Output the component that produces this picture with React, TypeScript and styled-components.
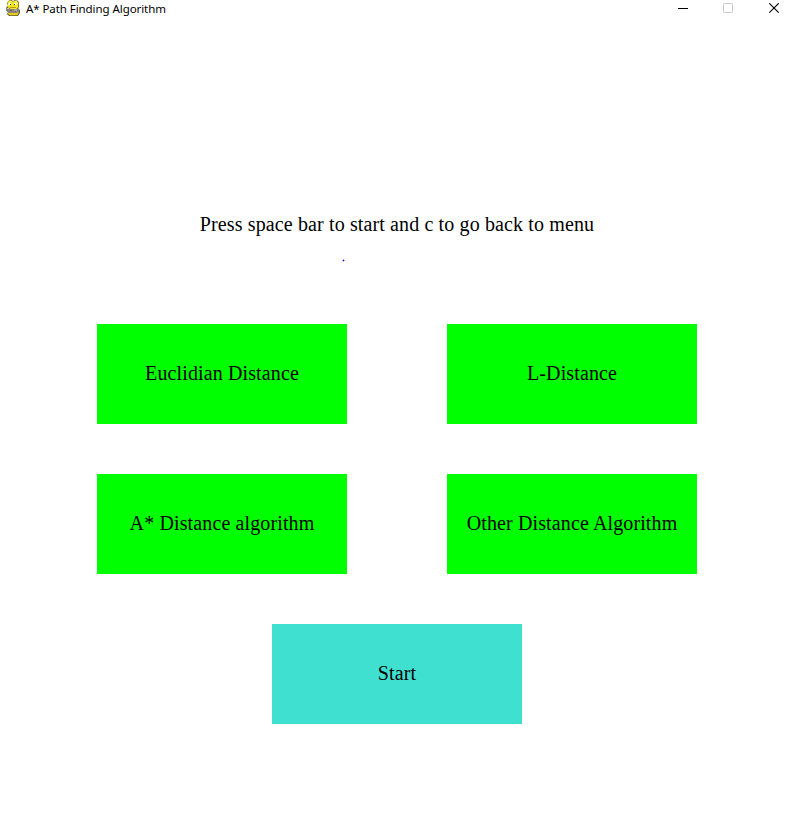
import React from "react";
import styled, { createGlobalStyle } from "styled-components";

const GlobalStyle = createGlobalStyle`
  * { box-sizing: border-box; }
  body { margin: 0; background: #fff; overflow: hidden; }
`;

const Window = styled.div`
  width: 794px;
  height: 815px;
  display: flex;
  flex-direction: column;
  background: #fff;
  color: #000;
`;

const TitleBar = styled.header`
  height: 24px;
  display: flex;
  align-items: flex-start;
  padding-left: 5px;
`;

const Title = styled.h1`
  flex: 1;
  margin: 2px 0 0 5px;
  white-space: nowrap;
  font: 400 11.5px/14px "Noto Sans", "Open Sans", sans-serif;
  letter-spacing: -0.07px;
`;

const Controls = styled.div`
  display: flex;
  height: 16px;
  padding: 3px 14px 0 0;
`;

const ControlButton = styled.button`
  width: 11px;
  height: 11px;
  margin-left: 35px;
  padding: 0;
  border: 0;
  background: none;
  display: flex;
  color: #000;

  &:disabled { color: #ccc; margin-left: 34px; }
`;

const Canvas = styled.main`
  flex: 1;
  display: flex;
  flex-direction: column;
  align-items: center;
  font: 20px/24px "Liberation Serif", serif;
  letter-spacing: 0.125px;
`;

const Hint = styled.p`
  margin: 188px 0 0;
  height: 47px;
`;

const Dot = styled.svg`
  margin-right: 107px;
  display: block;
`;

const Options = styled.div`
  display: grid;
  grid-template-columns: 250px 250px;
  grid-auto-rows: 100px;
  gap: 50px 100px;
  margin: 62px 0 50px;
`;

const MenuButton = styled.button<{ $primary?: boolean }>`
  width: 250px;
  height: 100px;
  padding: 0 0 2px;
  border: 0;
  font: inherit;
  letter-spacing: inherit;
  color: #000;
  background: ${(p) => (p.$primary ? "#40e0d0" : "#0f0")};
`;

const options = ["Euclidian Distance", "L-Distance", "A* Distance algorithm", "Other Distance Algorithm"];

function SnakeIcon() {
  return (
    <svg width="16" height="17" viewBox="0 0 16 17">
      <path d="M4 .5 6.5 0 8 1l2-1 3 .7L14 3v4l-1 1.5 2 1.5v3l-2 3H4l-2-2 1-2-2-1.5L1.5 7 3 6 2 3z" fill="#625d30" />
      <path d="M3.5 1.2 6 .5 8 1.5l3-1 2.3 2v4.5L11.5 9H5L2.7 7V3z" fill="#f7e51d" />
      <path d="M3 12.5h8l2-1 1 .5-1.5 3.3H5L3 14z" fill="#e2ca20" />
      <path d="M4 1.5h2v1H4zM10 1.2h2v1h-2z" fill="#fff79a" />
      <path d="M3.5 3h2.5v2H3.5zM9 3h2.5v2H9z" fill="#fff" />
      <path d="M5 4h1v1H5zM9 4h1v1H9z" fill="#403b1b" />
      <path d="M5 7h6v1H5z" fill="#b69b1b" />
      <path d="M1 8h3l2 1h5l3-.5V12l-3 1H5l-3-1.5z" fill="#85857e" />
      <path d="M2 8h2v1H2zM9 9.5h3v1H9z" fill="#c8c8c2" />
      <path d="M5 10h2v1H5zM10 11h1v1h-1z" fill="#994a42" />
    </svg>
  );
}

export default function App() {
  return (
    <Window>
      <GlobalStyle />
      <TitleBar>
        <SnakeIcon />
        <Title>A* Path Finding Algorithm</Title>
        <Controls>
          <ControlButton aria-label="Minimize">
            <svg width="10" height="10" stroke="currentColor"><path d="M0 5.5H10" /></svg>
          </ControlButton>
          <ControlButton disabled aria-label="Maximize">
            <svg width="10" height="10" fill="none" stroke="currentColor"><path d="M.5.5h9v9h-9z" /></svg>
          </ControlButton>
          <ControlButton aria-label="Close">
            <svg width="11" height="11" stroke="currentColor" strokeWidth="1.15"><path d="M.3.3 9.7 9.7M9.7.3.3 9.7" /></svg>
          </ControlButton>
        </Controls>
      </TitleBar>
      <Canvas>
        <Hint>Press space bar to start and c to go back to menu</Hint>
        <Dot width="3" height="3">
          <path d="M1 0h1v3H1zM0 1h3v1H0z" fill="#a6a6ff" />
          <path d="M1 1h1v1H1z" fill="#00f" />
        </Dot>
        <Options>
          {options.map((label) => <MenuButton key={label}>{label}</MenuButton>)}
        </Options>
        <MenuButton $primary>Start</MenuButton>
      </Canvas>
    </Window>
  );
}
